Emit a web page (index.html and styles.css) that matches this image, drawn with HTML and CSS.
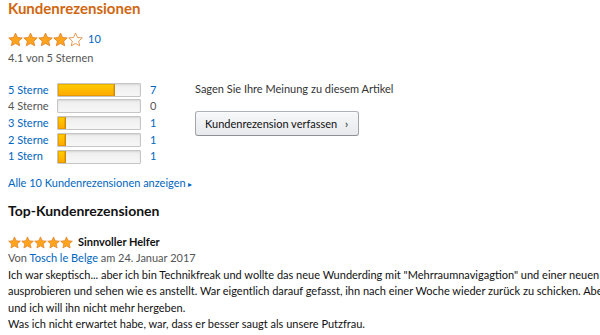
FILE: index.html
```html
<!DOCTYPE html>
<html lang="de">
<head>
<meta charset="UTF-8" />
<title>Kundenrezensionen</title>
<link rel="stylesheet" href="styles.css">
</head>
<body>
<svg width="0" height="0" class="defs">
<defs>
<symbol id="star" viewBox="0 0 24 23">
<path d="M12 1.2l3.2 7 7.6.8-5.7 5.1 1.6 7.5L12 17.8l-6.7 3.8 1.6-7.5L1.2 9l7.6-.8z"/>
</symbol>
</defs>
</svg>

<div class="page">
<h1 class="title">Kundenrezensionen</h1>

<div class="summary">
<div class="stars big">
<svg class="star full"><use href="#star"/></svg>
<svg class="star full"><use href="#star"/></svg>
<svg class="star full"><use href="#star"/></svg>
<svg class="star full"><use href="#star"/></svg>
<svg class="star empty"><use href="#star"/></svg>
<a href="#" class="link count">10</a>
</div>
<div class="avg">4.1 von 5 Sternen</div>
</div>

<div class="overview">
<!-- Histogram -->
<div class="histogram">
<a href="#" class="link">5 Sterne</a><div class="bar"><div class="fill" style="width:70%"></div></div><a href="#" class="link">7</a>
<span class="zero">4 Sterne</span><div class="bar"></div><span class="zero">0</span>
<a href="#" class="link">3 Sterne</a><div class="bar"><div class="fill" style="width:10%"></div></div><a href="#" class="link">1</a>
<a href="#" class="link">2 Sterne</a><div class="bar"><div class="fill" style="width:10%"></div></div><a href="#" class="link">1</a>
<a href="#" class="link">1 Stern</a><div class="bar"><div class="fill" style="width:10%"></div></div><a href="#" class="link">1</a>
</div>

<div class="write">
<p>Sagen Sie Ihre Meinung zu diesem Artikel</p>
<button class="btn">Kundenrezension verfassen <span class="chev">›</span></button>
</div>
</div>

<a href="#" class="link all">Alle 10 Kundenrezensionen anzeigen <span class="tri">▸</span></a>

<h2 class="top">Top-Kundenrezensionen</h2>

<div class="review">
<div class="review-head">
<div class="stars small">
<svg class="star full"><use href="#star"/></svg>
<svg class="star full"><use href="#star"/></svg>
<svg class="star full"><use href="#star"/></svg>
<svg class="star full"><use href="#star"/></svg>
<svg class="star full"><use href="#star"/></svg>
</div>
<span class="review-title">Sinnvoller Helfer</span>
</div>
<div class="byline">Von <a href="#" class="link">Tosch le Belge</a> am 24. Januar 2017</div>
<p class="review-text">Ich war skeptisch... aber ich bin Technikfreak und wollte das neue Wunderding mit "Mehrraumnavigagtion" und einer neuen Form<br>ausprobieren und sehen wie es anstellt. War eigentlich darauf gefasst, ihn nach einer Woche wieder zurück zu schicken. Aber er hat mich überzeugt<br>und ich will ihn nicht mehr hergeben.<br>Was ich nicht erwartet habe, war, dass er besser saugt als unsere Putzfrau.</p>
</div>
</div>
</body>
</html>
```

FILE: styles.css
```css
* {
box-sizing: border-box;
margin: 0;
padding: 0;
}

body {
font-family: Lato, "Open Sans", sans-serif;
font-size: 11px;
line-height: 14.4px;
color: #333;
background: #fff;
overflow: hidden;
}

.defs {
position: absolute;
}

.page {
padding: 0 8px;
width: 600px;
overflow: hidden;
}

.link {
color: #0066c0;
text-decoration: none;
}

.title {
font-size: 15px;
font-weight: bold;
color: #d0670f;
line-height: 15px;
margin-top: 1px;
}

.summary {
margin-top: 16px;
}

.stars {
display: flex;
align-items: center;
}

.star {
fill: #ffa41c;
stroke: #de7921;
stroke-width: 1.2;
}

.star.empty {
fill: #fff;
}

.big .star {
width: 15px;
height: 15px;
}

.big .count {
margin-left: 5px;
}

.avg {
margin-top: 4px;
color: #555;
}

.overview {
display: flex;
margin-top: 16px;
}

.histogram {
display: grid;
grid-template-columns: 49px 84px 38px;
grid-auto-rows: 16.7px;
align-items: center;
}

.histogram > :nth-child(3n) {
padding-left: 9px;
}

.zero {
color: #555;
}

.bar {
width: 84px;
height: 14px;
background: linear-gradient(#eee, #f7f7f7);
border: 1px solid #c6c6c6;
border-radius: 1px;
box-shadow: inset 0 1px 2px rgba(0, 0, 0, 0.1);
}

.fill {
height: 100%;
background: linear-gradient(#ffce00, #ffa700);
border-right: 1px solid #d48a00;
box-shadow: inset 0 0 0 1px rgba(200, 130, 0, 0.4);
}

.write {
margin-left: 16px;
}

.write p {
color: #333;
line-height: 16px;
}

.btn {
margin-top: 14px;
height: 25px;
padding: 0 10px 0 9px;
font-family: inherit;
font-size: 11px;
color: #111;
background: linear-gradient(#f7f8fa, #e7e9ec);
border: 1px solid #adb1b8;
border-color: #adb1b8 #a2a6ac #8d9096;
border-radius: 3px;
box-shadow: inset 0 1px 0 rgba(255, 255, 255, 0.6);
}

.chev {
margin-left: 5px;
font-size: 11px;
}

.all {
display: block;
margin-top: 11px;
}

.tri {
font-size: 8px;
}

.top {
font-size: 14px;
font-weight: bold;
color: #111;
line-height: 16px;
margin-top: 12px;
}

.review {
margin-top: 16px;
}

.review-head {
display: flex;
align-items: center;
}

.small .star {
width: 13px;
height: 13px;
}

.review-title {
margin-left: 5px;
font-weight: bold;
color: #111;
}

.byline {
color: #555;
margin-top: 1px;
}

.review-text {
margin-top: 2px;
line-height: 16.3px;
color: #111;
white-space: nowrap;
}
```
